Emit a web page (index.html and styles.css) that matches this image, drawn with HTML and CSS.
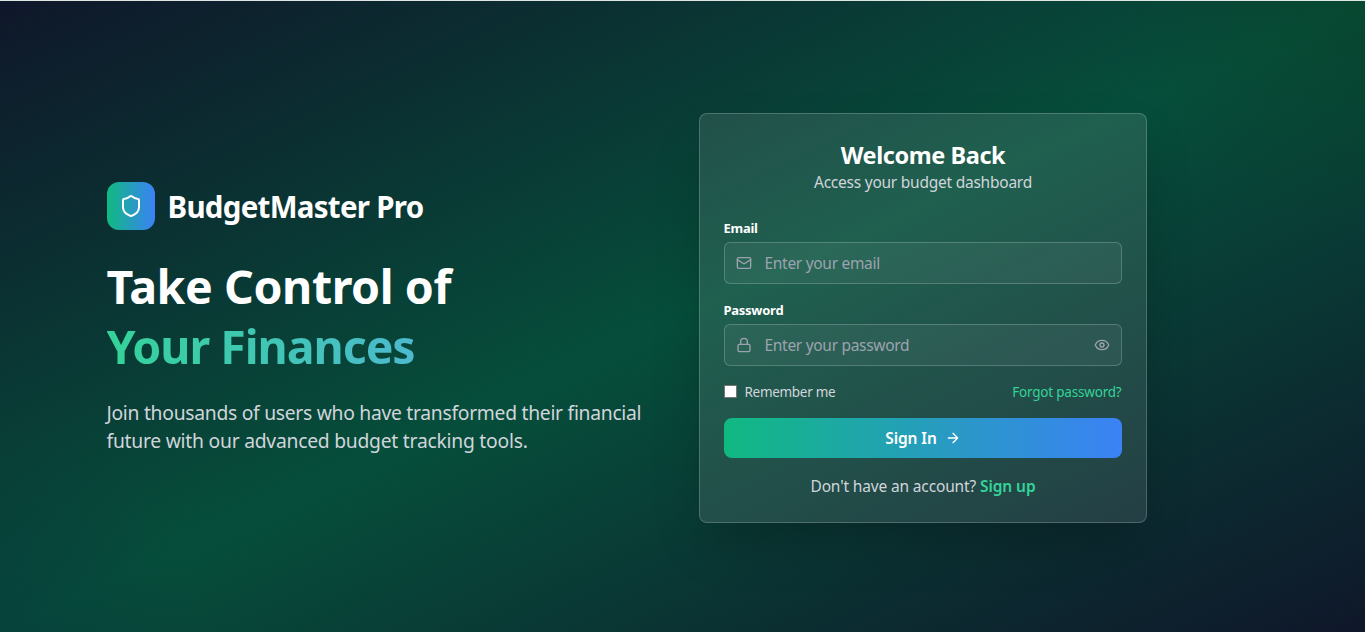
FILE: index.html
```html
<!DOCTYPE html>
<html lang="en">
<head>
<meta charset="utf-8">
<title>BudgetMaster Pro</title>
<link rel="stylesheet" href="styles.css">
</head>
<body>
<main class="page">
  <div class="layout">
    <section class="intro">
      <div class="brand">
        <div class="brand-mark">
          <svg class="icon-shield" viewBox="0 0 24 24"><path d="M20 13c0 5-3.5 7.5-7.66 8.95a1 1 0 0 1-.67-.01C7.5 20.500 4 18 4 13V6a1 1 0 0 1 1-1c2 0 4.500-1.200 6.240-2.720a1.170 1.170 0 0 1 1.520 0C14.510 3.810 17 5 19 5a1 1 0 0 1 1 1z"/></svg>
        </div>
        <span class="brand-name">BudgetMaster Pro</span>
      </div>
      <h1 class="headline"><span>Take Control of</span><span class="headline-accent">Your Finances</span></h1>
      <p class="lead">Join thousands of users who have transformed their financial<br><span class="lead-end">future with our advanced budget tracking tools.</span></p>
    </section>
    <section class="card">
      <header class="card-head">
        <h2 class="card-title">Welcome Back</h2>
        <p class="card-sub">Access your budget dashboard</p>
      </header>
      <form class="form">
        <div class="field">
          <label class="label">Email</label>
          <div class="input">
            <svg class="icon" viewBox="0 0 24 24"><rect width="20" height="16" x="2" y="4" rx="2"/><path d="m22 7-8.970 5.700a1.940 1.940 0 0 1-2.060 0L2 7"/></svg>
            <span class="placeholder">Enter your email</span>
          </div>
        </div>
        <div class="field">
          <label class="label">Password</label>
          <div class="input">
            <svg class="icon" viewBox="0 0 24 24"><rect width="18" height="11" x="3" y="11" rx="2"/><path d="M7 11V7a5 5 0 0 1 10 0v4"/></svg>
            <span class="placeholder">Enter your password</span>
            <svg class="icon icon-eye" viewBox="0 0 24 24"><path d="M2.060 12.350a1 1 0 0 1 0-.7 10.750 10.750 0 0 1 19.880 0 1 1 0 0 1 0 .7 10.750 10.750 0 0 1-19.880 0"/><circle cx="12" cy="12" r="3"/></svg>
          </div>
        </div>
        <div class="options">
          <label class="remember"><input class="check" type="checkbox"><span>Remember me</span></label>
          <a class="forgot">Forgot password?</a>
        </div>
        <button class="submit" type="button"><span>Sign In</span><svg class="icon-arrow" viewBox="0 0 24 24"><path d="M5 12h14M12 5l7 7-7 7"/></svg></button>
      </form>
      <p class="signup">Don't have an account? <a class="signup-link">Sign up</a></p>
    </section>
  </div>
</main>
</body>
</html>
```
FILE: styles.css
```css
* { box-sizing: border-box; margin: 0; padding: 0; }
body { font-family: "Noto Sans", "Open Sans", sans-serif; font-size: 15.500px; line-height: 24px; color: #fff; }
svg { fill: none; stroke: currentColor; stroke-width: 2; stroke-linecap: round; stroke-linejoin: round; flex: none; }
.page {
  height: 632px;
  border-top: 1px solid #dfe5e3;
  background:
    radial-gradient(circle at 100% 0, rgba(8, 66, 38, .5), rgba(8, 66, 38, 0) 240px),
    radial-gradient(circle at 0 100%, rgba(6, 56, 60, .5), rgba(6, 56, 60, 0) 200px),
    linear-gradient(to bottom right, #0f172a, #064e3b, #0f172a);
  display: flex;
  justify-content: center;
  overflow: hidden;
  padding-top: 3px;
}
.layout { width: 1152px; display: grid; grid-template-columns: 560px 448px; column-gap: 32px; align-items: center; }
.intro { display: flex; flex-direction: column; }
.brand { display: flex; align-items: center; gap: 13px; margin-bottom: 26px; }
.brand-mark { width: 48px; height: 48px; border-radius: 12px; background: linear-gradient(to right, #10b981, #3b82f6); display: grid; place-items: center; }
.icon-shield { width: 24px; height: 24px; }
.brand-name { font-size: 29.500px; font-weight: 700; line-height: 36px; letter-spacing: -.72px; padding-top: 3px; }
.headline { font-size: 46.500px; line-height: 60px; font-weight: 700; letter-spacing: -.42px; display: flex; flex-direction: column; margin-bottom: 23px; }
.headline-accent { letter-spacing: -1.050px; background: linear-gradient(to right, #34d399, #60a5fa); -webkit-background-clip: text; background-clip: text; color: transparent; }
.lead { font-size: 19.300px; line-height: 28px; letter-spacing: -.28px; color: #d1d5db; white-space: nowrap; }
.lead-end { letter-spacing: -.240px; }
.card { height: 410px; border: 1px solid rgba(255,255,255,.2); border-radius: 8px; background: rgba(255,255,255,.1); padding: 25px 24px 24px; box-shadow: 0 25px 50px -12px rgba(0,0,0,.25); }
.card-head { text-align: center; margin-bottom: 25px; padding-left: 1px; }
.card-title { font-size: 23.500px; line-height: 32px; font-weight: 700; letter-spacing: -.42px; }
.card-sub { color: #d1d5db; line-height: 22px; letter-spacing: -.240px; }
.form { display: flex; flex-direction: column; gap: 16px; }
.label { display: block; font-size: 13px; font-weight: 700; line-height: 20px; margin-bottom: 4px; letter-spacing: -.26px; }
.input { height: 42px; border: 1px solid rgba(255,255,255,.2); border-radius: 6px; background: rgba(255,255,255,.05); display: flex; align-items: center; padding: 0 11px; color: #9ca3af; }
.placeholder { letter-spacing: -.3px; }
.icon { width: 16px; height: 16px; margin-right: 13px; }
.icon-eye { margin: 0 0 0 auto; }
.options { display: flex; justify-content: space-between; font-size: 13.500px; line-height: 20px; color: #d1d5db; }
.remember { display: flex; align-items: center; gap: 8px; letter-spacing: -.3px; }
.check { appearance: none; width: 13px; height: 13px; background: #fff; border: 1px solid #767676; border-radius: 1px; margin-bottom: 1px; }
.forgot { color: #34d399; letter-spacing: -.2px; }
.submit { height: 40px; border: 0; border-radius: 8px; background: linear-gradient(to right, #10b981, #3b82f6); color: #fff; font: 600 15.500px "Noto Sans", "Open Sans", sans-serif; letter-spacing: -.1px; display: flex; align-items: center; justify-content: center; gap: 8px; padding-left: 1px; }
.icon-arrow { width: 16px; height: 16px; }
.signup { text-align: center; color: #d1d5db; margin-top: 16px; padding-left: 1px; letter-spacing: -.15px; }
.signup-link { color: #34d399; font-weight: 600; letter-spacing: -.08px; }
```
